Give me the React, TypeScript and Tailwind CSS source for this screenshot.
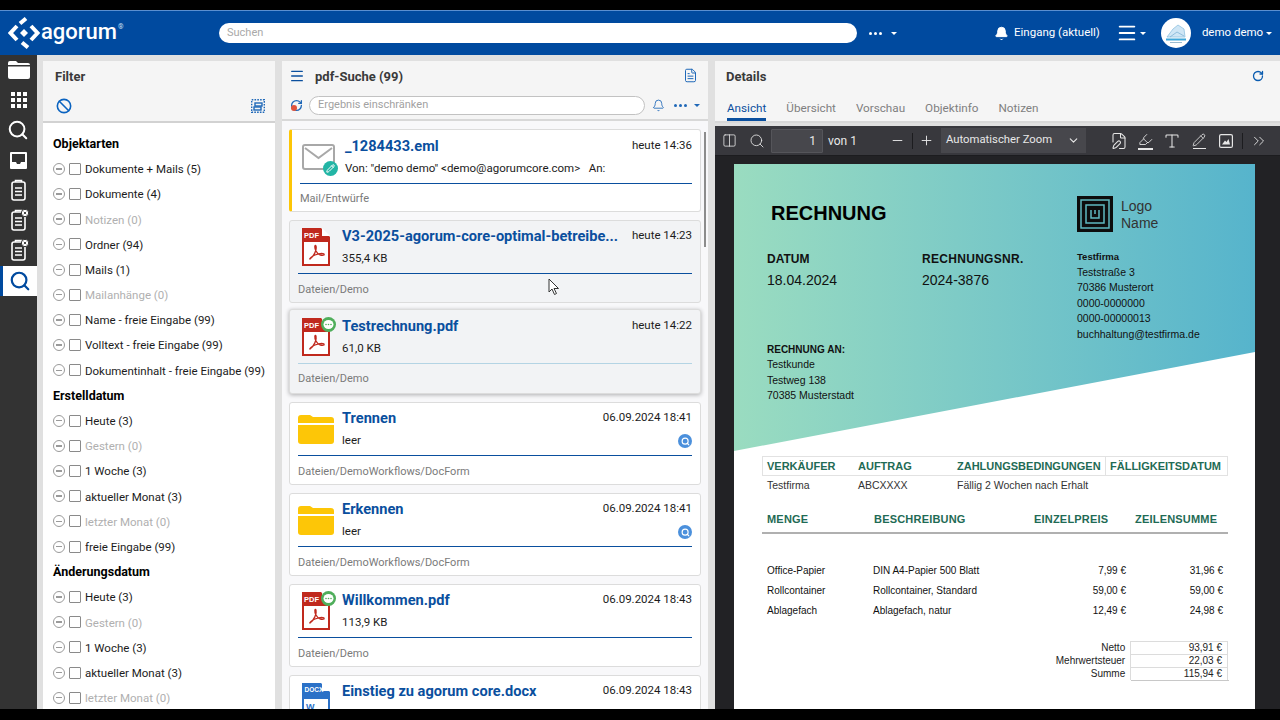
import React from 'react';
import { Ban, Bell, ChevronDown, ChevronsRight, FileText, Highlighter, Menu, Minus, Pencil, Plus, RotateCw, Search, Type, Columns2, FilePen } from 'lucide-react';

const Caret = ({ className = 'border-t-white' }: { className?: string }) => (
  <span className={`inline-block w-0 h-0 border-x-[3px] border-x-transparent border-t-[3px] ${className}`} />
);

const Dots = ({ className = 'bg-white' }: { className?: string }) => (
  <span className="inline-flex gap-[2px]">
    <span className={`w-[3px] h-[3px] rounded-full ${className}`} />
    <span className={`w-[3px] h-[3px] rounded-full ${className}`} />
    <span className={`w-[3px] h-[3px] rounded-full ${className}`} />
  </span>
);

const AgorumMark = () => (
  <svg width="32" height="32" viewBox="0 0 32 32" fill="none" stroke="#fff" strokeWidth="4">
    <path d="M9 9 L2.5 16 L9 23" />
    <path d="M23 9 L29.5 16 L23 23" />
    <path d="M12 6.5 L18 1.5" />
    <path d="M14 25.5 L20 30.5" />
    <path d="M16 12 L20 16 L16 20 L12 16 Z" fill="#fff" stroke="none" />
  </svg>
);

const Avatar = () => (
  <svg width="30" height="30" viewBox="0 0 30 30">
    <circle cx="15" cy="15" r="15" fill="#fff" />
    <path d="M6 19 L12 11 L17 7 L23 11 L24 19 Z" fill="#cfe6f5" stroke="#8fc2e0" strokeWidth="0.8" />
    <path d="M9 19 L16 14 L23 18" fill="none" stroke="#7fb4d6" strokeWidth="0.8" />
    <rect x="5" y="20.5" width="20" height="2" fill="#3fa7d9" />
    <rect x="9" y="24" width="12" height="1" fill="#9bbcd0" />
  </svg>
);

const Header = () => (
  <header className="h-[45px] shrink-0 bg-[#004a9f] border-t border-[#5a8fd0] flex items-center text-white whitespace-nowrap">
    <div className="w-[219px] shrink-0 pl-2 flex items-center gap-[1px]">
      <AgorumMark />
      <span className="text-[22px] leading-none font-medium -mt-[3px]">agorum</span>
      <span className="text-[7px] -mt-3 text-[#cfe0f5]">®</span>
    </div>
    <div className="w-[638px] shrink-0 h-[20px] bg-white rounded-full flex items-center px-2 pt-[1px] text-[11px] text-[#a9a9a9]">Suchen</div>
    <div className="ml-[12px] flex items-center gap-[9px] w-[125px] shrink-0">
      <Dots />
      <Caret />
    </div>
    <Bell size={15} fill="#fff" strokeWidth={1.5} className="shrink-0" />
    <span className="ml-[5px] text-[11.5px]">Eingang (aktuell)</span>
    <Menu size={22} strokeWidth={2} className="ml-[16px] shrink-0" />
    <span className="ml-[2px] flex"><Caret /></span>
    <span className="ml-[15px] flex shrink-0"><Avatar /></span>
    <span className="ml-[11px] text-[11.5px]">demo demo</span>
    <span className="ml-[3px] flex"><Caret /></span>
  </header>
);

const ClipboardIcon = ({ badge }: { badge?: boolean }) => (
  <svg width="20" height="22" viewBox="0 0 20 22" fill="none" stroke="#fff" strokeWidth="1.6">
    <rect x="3" y="3" width="13" height="18" rx="2" />
    <path d="M6.5 3 V1.5 H12.5 V3" />
    <path d="M6 9 H13 M6 12.5 H13 M6 16 H13" />
    {badge && (
      <>
        <circle cx="16" cy="4" r="3.7" fill="#fff" stroke="#333" strokeWidth="1" />
        <path d="M14.8 2.8 L17.2 5.2 M17.2 2.8 L14.8 5.2" stroke="#333" strokeWidth="0.9" />
      </>
    )}
  </svg>
);

const Sidebar = () => (
  <nav className="w-[37px] shrink-0 bg-[#333333] flex flex-col text-white">
    <div className="h-[30px] flex items-center justify-center">
      <svg width="22" height="18" viewBox="0 0 22 18" fill="#fff">
        <path d="M2 0 H8 L10 2 H20 A2 2 0 0 1 22 4 H0 V2 A2 2 0 0 1 2 0 Z" />
        <path d="M0 5.5 H22 V16 A2 2 0 0 1 20 18 H2 A2 2 0 0 1 0 16 Z" />
      </svg>
    </div>
    <div className="h-[30px] flex items-center justify-center">
      <svg width="16" height="16" viewBox="0 0 16 16" fill="#fff">
        <rect x="0" y="0" width="4" height="4" /><rect x="6" y="0" width="4" height="4" /><rect x="12" y="0" width="4" height="4" />
        <rect x="0" y="6" width="4" height="4" /><rect x="6" y="6" width="4" height="4" /><rect x="12" y="6" width="4" height="4" />
        <rect x="0" y="12" width="4" height="4" /><rect x="6" y="12" width="4" height="4" /><rect x="12" y="12" width="4" height="4" />
      </svg>
    </div>
    <div className="h-[30px] flex items-center justify-center"><Search size={22} strokeWidth={2.2} className="-ml-[1px]" /></div>
    <div className="h-[30px] flex items-center justify-center">
      <svg width="17" height="17" viewBox="0 0 17 17" fill="#fff">
        <path fillRule="evenodd" d="M1 0 H16 A1 1 0 0 1 17 1 V16 A1 1 0 0 1 16 17 H1 A1 1 0 0 1 0 16 V1 A1 1 0 0 1 1 0 Z M2 2 V10 H6 L7 12 H10 L11 10 H15 V2 Z" />
      </svg>
    </div>
    <div className="h-[30px] flex items-center justify-center"><ClipboardIcon /></div>
    <div className="h-[30px] flex items-center justify-center"><ClipboardIcon badge /></div>
    <div className="h-[30px] flex items-center justify-center"><ClipboardIcon badge /></div>
    <div className="h-[30px] mt-[1px] bg-white border-l-[3px] border-[#004a9f] flex items-center justify-center text-[#004a9f]">
      <Search size={22} strokeWidth={2.4} />
    </div>
  </nav>
);

const FilterRow = ({ label, off }: { label: string; off?: boolean }) => (
  <div className="h-[25.2px] flex items-center">
    <span className="w-[12px] h-[12px] rounded-full border border-[#9a9a9a] flex items-center justify-center shrink-0">
      <span className="w-[6px] h-[1.5px] bg-[#9a9a9a]" />
    </span>
    <span className="ml-[4px] w-[12px] h-[12px] border border-[#8a8a8a] rounded-[1px] bg-white shrink-0" />
    <span className={`ml-[4px] pt-[2px] text-[11.5px] whitespace-nowrap ${off ? 'text-[#b0b0b0]' : 'text-[#1c1c1c]'}`}>{label}</span>
  </div>
);

const FilterTitle = ({ label }: { label: string }) => (
  <div className="h-[25.2px] pt-[2px] flex items-center text-[12.5px] font-bold text-black">{label}</div>
);

const FilterPanel = () => (
  <section className="w-[232px] shrink-0 flex flex-col bg-white overflow-hidden">
    <div className="h-[62px] shrink-0 bg-[#f5f5f5] border-b-2 border-[#d2d2d2] px-[12px] flex flex-col">
      <div className="h-[30px] pt-[2px] flex items-center text-[13px] font-bold text-[#3a3a3a]">Filter</div>
      <div className="h-[30px] flex items-center justify-between pl-[2px] pr-0 -mr-[2px]">
        <Ban size={16} strokeWidth={2.4} className="text-[#0a63c0] -ml-[1px]" />
        <svg width="14" height="14" viewBox="0 0 14 14" fill="none" stroke="#1f68b8" strokeWidth="1.4">
          <rect x="0.7" y="0.7" width="12.6" height="12.6" strokeDasharray="1.6 1.2" />
          <rect x="4" y="4" width="7" height="3" />
          <rect x="3" y="8" width="7" height="3" />
        </svg>
      </div>
    </div>
    <div className="pl-[10px] pt-[8px]">
      <FilterTitle label="Objektarten" />
      <FilterRow label="Dokumente + Mails (5)" />
      <FilterRow label="Dokumente (4)" />
      <FilterRow label="Notizen (0)" off />
      <FilterRow label="Ordner (94)" />
      <FilterRow label="Mails (1)" />
      <FilterRow label="Mailanhänge (0)" off />
      <FilterRow label="Name - freie Eingabe (99)" />
      <FilterRow label="Volltext - freie Eingabe (99)" />
      <FilterRow label="Dokumentinhalt - freie Eingabe (99)" />
      <FilterTitle label="Erstelldatum" />
      <FilterRow label="Heute (3)" />
      <FilterRow label="Gestern (0)" off />
      <FilterRow label="1 Woche (3)" />
      <FilterRow label="aktueller Monat (3)" />
      <FilterRow label="letzter Monat (0)" off />
      <FilterRow label="freie Eingabe (99)" />
      <FilterTitle label="Änderungsdatum" />
      <FilterRow label="Heute (3)" />
      <FilterRow label="Gestern (0)" off />
      <FilterRow label="1 Woche (3)" />
      <FilterRow label="aktueller Monat (3)" />
      <FilterRow label="letzter Monat (0)" off />
    </div>
  </section>
);

const PdfIcon = ({ badge }: { badge?: boolean }) => (
  <span className="relative block w-[28px] h-[38px]">
    <svg width="28" height="38" viewBox="0 0 28 38">
      <path d="M0 0 H19 L28 9 V38 H0 Z" fill="#c0291d" />
      <path d="M20 0 L28 8 H20 Z" fill="#fff" />
      <rect x="2" y="14" width="24" height="22" fill="#fff" />
      <text x="2" y="9.5" fontSize="7.5" fontWeight="700" fill="#fff" fontFamily="Liberation Sans, sans-serif">PDF</text>
      <path d="M8 31 C12 28 15 22 14 18 C13 16 12 19 14 23 C16 27 20 28 22 27 C23 25 18 25 13 27 C10 28 7 31 8 31 Z" fill="none" stroke="#c0291d" strokeWidth="1.3" />
    </svg>
    {badge && (
      <svg className="absolute -top-[1px] -right-[6px]" width="15" height="15" viewBox="0 0 15 15">
        <circle cx="7.5" cy="7.5" r="7.5" fill="#4fae5b" />
        <ellipse cx="7.5" cy="7.5" rx="5" ry="4.5" fill="#fff" />
        <circle cx="5" cy="7.5" r="0.8" fill="#4fae5b" />
        <circle cx="7.5" cy="7.5" r="0.8" fill="#4fae5b" />
        <circle cx="10" cy="7.5" r="0.8" fill="#4fae5b" />
      </svg>
    )}
  </span>
);

const FolderIcon = () => (
  <svg width="36" height="29" viewBox="0 0 36 29" fill="#fdc607">
    <path d="M0 3 A3 3 0 0 1 3 0 H12 L15 2 H33 A3 3 0 0 1 36 5 V8 H0 Z" />
    <path d="M0 10 H36 V26 A3 3 0 0 1 33 29 H3 A3 3 0 0 1 0 26 Z" />
  </svg>
);

const MailIcon = () => (
  <span className="relative block w-[33px] h-[26px]">
    <svg width="33" height="26" viewBox="0 0 33 26" fill="none" stroke="#a8a8a8" strokeWidth="2">
      <rect x="1" y="1" width="31" height="24" rx="2" />
      <path d="M3 4 L16.5 14 L30 4" />
    </svg>
    <span className="absolute -right-[3px] -bottom-[6px] w-[15px] h-[15px] rounded-full bg-[#22b5a5] flex items-center justify-center text-white">
      <Pencil size={9} strokeWidth={2.6} />
    </span>
  </span>
);

const DocxIcon = () => (
  <svg width="28" height="38" viewBox="0 0 28 38">
    <path d="M0 0 H19 L28 9 V38 H0 Z" fill="#2b71c7" />
    <path d="M20 0 L28 8 H20 Z" fill="#fff" />
    <rect x="2" y="16" width="24" height="20" fill="#fff" />
    <text x="2.5" y="9" fontSize="6.5" fontWeight="700" fill="#fff" fontFamily="Liberation Sans, sans-serif">DOCX</text>
    <text x="4" y="27" fontSize="9" fontWeight="700" fill="#2b71c7" fontFamily="Liberation Sans, sans-serif">W</text>
  </svg>
);

type CardProps = {
  icon: React.ReactNode;
  iconClass: string;
  title: string;
  time: string;
  sub?: React.ReactNode;
  path: string;
  found?: boolean;
  variant?: 'mail' | 'grey' | 'active';
  lightLine?: boolean;
  cursor?: boolean;
};

const Card = ({ icon, iconClass, title, time, sub, path, found, variant, lightLine, cursor }: CardProps) => (
  <div
    className={`relative shrink-0 rounded-[3px] border border-[#dcdcdc] pr-[8px] pl-[8px] ${
      variant === 'active' ? 'h-[85px] -mt-[2px] pt-[1px]' : 'h-[83px]'
    } ${variant === 'mail' ? 'bg-white border-l-[3px] border-l-[#fdc607] pt-[1px]' : ''} ${
      variant === 'grey' ? 'bg-[#f2f3f5]' : ''
    } ${variant === 'active' ? 'bg-[#f2f3f5] shadow-[0_1px_4px_rgba(0,0,0,0.3)]' : ''} ${!variant ? 'bg-white' : ''}`}
  >
    <div className="flex h-[52px] items-start">
      <div className={`shrink-0 ${iconClass}`}>{icon}</div>
      <div className="flex-1 min-w-0 pt-[6px]">
        <div className="flex items-center justify-between h-[20px] gap-[12px]">
          <span className="text-[14.6px] font-bold text-[#0a4f9e] whitespace-nowrap">{title}</span>
          <span className="text-[11.5px] text-[#1c1c1c] whitespace-nowrap shrink-0 -mt-[2px]">{time}</span>
        </div>
        <div className="flex items-center justify-between h-[20px] mt-[2px] text-[11.5px] text-[#1c1c1c]">
          <span className="whitespace-pre">{sub}</span>
          {found && (
            <span className="w-[14px] h-[14px] rounded-full bg-[#4b90dc] flex items-center justify-center text-white">
              <Search size={9} strokeWidth={3} />
            </span>
          )}
        </div>
      </div>
    </div>
    <div className={`border-t ${lightLine ? 'border-[#b4d4e4]' : 'border-[#0a4f9e]'}`} />
    <div className={`h-[20px] flex items-center text-[11px] text-[#7a7a7a] ${variant === 'mail' || variant === 'active' ? 'mt-[5px]' : 'mt-[6px]'}`}>{path}</div>
    {cursor && (
      <svg className="absolute left-[258px] top-[57px]" width="12" height="18" viewBox="0 0 12 18" fill="#fff" stroke="#333" strokeWidth="1">
        <path d="M1 1 V14 L4 11 L6.5 16.5 L8.5 15.5 L6 10.5 H10.5 Z" />
      </svg>
    )}
  </div>
);

const ResultPanel = () => (
  <section className="w-[426px] shrink-0 flex flex-col bg-[#f8f8fa] overflow-hidden relative">
    <div className="h-[60px] shrink-0 bg-[#f5f5f5] border-b-2 border-[#d8d8d8] flex flex-col px-[8px]">
      <div className="h-[30px] flex items-center">
        <Menu size={16} strokeWidth={2} className="text-[#0a4f9e] -ml-[1px]" />
        <span className="ml-[10px] pt-[2px] text-[13px] font-bold text-[#3a3a3a]">pdf-Suche (99)</span>
        <FileText size={15} strokeWidth={1.6} className="ml-auto text-[#1f68b8] mr-[2px]" />
      </div>
      <div className="h-[28px] mt-[1px] flex items-center">
        <span className="relative flex">
          <RotateCw size={13} strokeWidth={2.4} className="text-[#1f68b8]" />
          <span className="absolute left-[1px] top-[6px] w-[6px] h-[6px] rounded-full bg-[#e0533c]" />
        </span>
        <div className="ml-[6px] w-[337px] h-[19px] rounded-full border border-[#c2c2c2] bg-white flex items-center px-[8px] text-[11px] text-[#a2a2a2]">Ergebnis einschränken</div>
        <Bell size={13} strokeWidth={1.6} className="ml-[7px] text-[#1f68b8]" />
        <span className="ml-[9px] flex items-center gap-[7px]"><Dots className="bg-[#1f68b8]" /><Caret className="border-t-[#1f68b8]" /></span>
      </div>
    </div>
    <div className="flex flex-col gap-[8px] pl-[7px] pr-[7px] pt-[8px]">
      <Card variant="mail" iconClass="w-[45px] pt-[13px] pl-[2px]" icon={<MailIcon />} title="_1284433.eml" time="heute 14:36" sub={'Von: "demo demo" <demo@agorumcore.com>   An:'} path="Mail/Entwürfe" />
      <Card variant="grey" cursor iconClass="w-[44px] pt-[7px] pl-[4px]" icon={<PdfIcon />} title="V3-2025-agorum-core-optimal-betreibe..." time="heute 14:23" sub="355,4 KB" path="Dateien/Demo" />
      <Card variant="active" lightLine iconClass="w-[44px] pt-[7px] pl-[4px]" icon={<PdfIcon badge />} title="Testrechnung.pdf" time="heute 14:22" sub="61,0 KB" path="Dateien/Demo" />
      <Card iconClass="w-[44px] pt-[12px]" icon={<FolderIcon />} found title="Trennen" time="06.09.2024 18:41" sub="leer" path="Dateien/DemoWorkflows/DocForm" />
      <Card iconClass="w-[44px] pt-[12px]" icon={<FolderIcon />} found title="Erkennen" time="06.09.2024 18:41" sub="leer" path="Dateien/DemoWorkflows/DocForm" />
      <Card iconClass="w-[44px] pt-[7px] pl-[4px]" icon={<PdfIcon badge />} title="Willkommen.pdf" time="06.09.2024 18:43" sub="113,9 KB" path="Dateien/Demo" />
      <Card iconClass="w-[44px] pt-[7px] pl-[4px]" icon={<DocxIcon />} title="Einstieg zu agorum core.docx" time="06.09.2024 18:43" sub="" path="" />
    </div>
    <div className="absolute right-[2px] top-[71px] w-[2px] h-[115px] bg-[#8c8c8c]" />
  </section>
);

const ToolIcon = ({ children, className = '' }: { children: React.ReactNode; className?: string }) => (
  <span className={`flex flex-col items-center justify-center text-[#e6e6e6] ${className}`}>{children}</span>
);

const PdfToolbar = () => (
  <div className="h-[30px] shrink-0 bg-[#38383d] border-b border-[#1c1c1f] flex items-center text-[#e8e8e8] text-[12px] pl-[7px] whitespace-nowrap">
    <ToolIcon><Columns2 size={15} strokeWidth={1.3} /></ToolIcon>
    <ToolIcon className="ml-[12px]"><Search size={16} strokeWidth={1.3} /></ToolIcon>
    <div className="ml-[6px] w-[52px] h-[24px] bg-[#47474c] border border-[#55555a] rounded-[1px] flex items-center justify-end pr-[6px]">1</div>
    <span className="ml-[5px] w-[62px]">von 1</span>
    <ToolIcon><Minus size={15} strokeWidth={1.5} /></ToolIcon>
    <span className="ml-[7px] w-px h-[16px] bg-[#1c1c1f]" />
    <ToolIcon className="ml-[6px]"><Plus size={15} strokeWidth={1.5} /></ToolIcon>
    <div className="ml-[7px] w-[145px] h-[25px] bg-[#47474c] flex items-center justify-between pl-[5px] pr-[6px] text-[11.3px]">
      <span>Automatischer Zoom</span>
      <ChevronDown size={13} />
    </div>
    <ToolIcon className="ml-[24px]"><FilePen size={18} strokeWidth={1.4} /></ToolIcon>
    <ToolIcon className="ml-[10px]"><Highlighter size={15} strokeWidth={1.4} /><span className="w-[15px] h-[2px] bg-[#e6e6e6] mt-[1px]" /></ToolIcon>
    <ToolIcon className="ml-[10px]"><Type size={18} strokeWidth={1.4} /></ToolIcon>
    <ToolIcon className="ml-[11px]"><Pencil size={14} strokeWidth={1.4} /><span className="w-[13px] h-px bg-[#e6e6e6] mt-[1px]" /></ToolIcon>
    <ToolIcon className="ml-[13px]">
      <svg width="14" height="14" viewBox="0 0 14 14" fill="none" stroke="currentColor" strokeWidth="1.2">
        <rect x="0.6" y="0.6" width="12.8" height="12.8" rx="1.5" />
        <path d="M3 10.5 L6 6.5 L7.5 8 L9.5 5 L11 10.5 Z" fill="currentColor" stroke="none" />
      </svg>
    </ToolIcon>
    <span className="ml-[9px] w-px h-[16px] bg-[#1c1c1f]" />
    <ToolIcon className="ml-[7px]"><ChevronsRight size={18} strokeWidth={1.2} /></ToolIcon>
  </div>
);

const LogoMaze = () => (
  <svg width="36" height="36" viewBox="0 0 36 36" fill="none" stroke="#5fb9c0" strokeWidth="1.5">
    <rect width="36" height="36" fill="#0d0d0d" stroke="none" />
    <rect x="4" y="4" width="28" height="28" />
    <rect x="9" y="9" width="18" height="18" />
    <path d="M14 14 V22 H22 V14" />
    <path d="M18 14 V18" />
  </svg>
);

const ItemRow = ({ a, b, c, d }: { a: string; b: string; c: string; d: string }) => (
  <div className="grid grid-cols-[107px_160px_97px_102px] h-[20px] items-center text-[10px] text-[#111]">
    <span className="pl-[5px]">{a}</span>
    <span className="pl-[4px]">{b}</span>
    <span className="text-right">{c}</span>
    <span className="text-right pr-[5px]">{d}</span>
  </div>
);

const TotalRow = ({ label, value }: { label: string; value: string }) => (
  <div className="flex h-[13px] items-center text-[10px] leading-none text-[#222]">
    <span className="w-[364px] text-right">{label}</span>
    <span className="ml-[5px] w-[98px] pr-[5px] border-x border-t border-[#dcdcdc] h-[13px] flex items-center justify-end">{value}</span>
  </div>
);

const Invoice = () => (
  <div className="w-[521px] h-[560px] bg-white shrink-0 font-['Liberation_Sans',sans-serif] text-[#111]">
    <div className="h-[287px] bg-gradient-to-r from-[#9adcc0] to-[#56b4cc] [clip-path:polygon(0_0,100%_0,100%_188px,0_100%)] flex pl-[33px]">
      <div className="w-[310px] pt-[35px] shrink-0">
        <div className="h-[28px] pl-[4px] text-[20px] font-bold leading-[28px] text-black">RECHNUNG</div>
        <div className="flex mt-[22px]">
          <div className="w-[155px]">
            <div className="h-[20px] text-[12px] font-bold leading-[20px]">DATUM</div>
            <div className="h-[22px] text-[14px] leading-[22px]">18.04.2024</div>
          </div>
          <div>
            <div className="h-[20px] text-[12px] font-bold leading-[20px] tracking-[0.3px]">RECHNUNGSNR.</div>
            <div className="h-[22px] text-[14px] leading-[22px]">2024-3876</div>
          </div>
        </div>
        <div className="mt-[51px] text-[10px] leading-[15.3px]">
          <div className="font-bold">RECHNUNG AN:</div>
          <div className="text-[10.5px]">Testkunde</div>
          <div className="text-[10.5px]">Testweg 138</div>
          <div className="text-[10.5px]">70385 Musterstadt</div>
        </div>
      </div>
      <div className="pt-[32px]">
        <div className="flex items-center h-[36px]">
          <LogoMaze />
          <div className="ml-[8px] pt-[2px] text-[14px] leading-[17px] text-[#333]">Logo<br />Name</div>
        </div>
        <div className="mt-[17px] text-[10.5px] leading-[15.6px]">
          <div className="font-bold text-[9.5px]">Testfirma</div>
          <div>Teststraße 3</div>
          <div>70386 Musterort</div>
          <div>0000-0000000</div>
          <div>0000-00000013</div>
          <div>buchhaltung@testfirma.de</div>
        </div>
      </div>
    </div>
    <div className="pl-[28px] w-[494px] mt-[5px]">
      <div className="grid grid-cols-[90px_99px_153px_122px] h-[20px] items-center border border-[#e2e2e2] text-[11px] font-bold text-[#1f6b55]">
        <span className="pl-[4px]">VERKÄUFER</span>
        <span className="pl-[5px]">AUFTRAG</span>
        <span className="pl-[5px] whitespace-nowrap">ZAHLUNGSBEDINGUNGEN</span>
        <span className="pl-[4px] border-l border-[#e2e2e2] h-full flex items-center whitespace-nowrap">FÄLLIGKEITSDATUM</span>
      </div>
      <div className="grid grid-cols-[91px_99px_276px] h-[17px] mt-[1px] items-center text-[10.5px] text-[#333]">
        <span className="pl-[5px]">Testfirma</span>
        <span className="pl-[5px]">ABCXXXX</span>
        <span className="pl-[5px]">Fällig 2 Wochen nach Erhalt</span>
      </div>
      <div className="mt-[11px] grid grid-cols-[107px_160px_101px_98px] h-[29px] pt-[2px] items-center border-b-2 border-[#b0b0b0] text-[11px] font-bold text-[#1f6b55] tracking-[0.2px]">
        <span className="pl-[5px]">MENGE</span>
        <span className="pl-[5px]">BESCHREIBUNG</span>
        <span className="pl-[5px]">EINZELPREIS</span>
        <span className="pl-[5px]">ZEILENSUMME</span>
      </div>
      <div className="mt-[26px]">
        <ItemRow a="Office-Papier" b="DIN A4-Papier 500 Blatt" c="7,99 €" d="31,96 €" />
        <ItemRow a="Rollcontainer" b="Rollcontainer, Standard" c="59,00 €" d="59,00 €" />
        <ItemRow a="Ablagefach" b="Ablagefach, natur" c="12,49 €" d="24,98 €" />
      </div>
      <div className="mt-[21px]">
        <TotalRow label="Netto" value="93,91 €" />
        <TotalRow label="Mehrwertsteuer" value="22,03 €" />
        <TotalRow label="Summe" value="115,94 €" />
        <div className="h-px w-[98px] ml-[369px] bg-[#c8c8c8]" />
      </div>
    </div>
  </div>
);

const DetailsPanel = () => (
  <section className="flex-1 min-w-0 flex flex-col overflow-hidden">
    <div className="h-[62px] shrink-0 bg-[#f5f5f5] border-b-2 border-[#d8d8d8] flex flex-col pl-[12px] pr-[16px]">
      <div className="h-[30px] flex items-center justify-between">
        <span className="pt-[2px] text-[13px] font-bold text-[#3a3a3a] -ml-[1px]">Details</span>
        <RotateCw size={12} strokeWidth={2.6} className="text-[#0a5cb0]" />
      </div>
      <div className="flex-1 flex items-end gap-[20px] text-[11.7px] text-[#7f7f7f]">
        <span className="h-[30px] flex items-center text-[#0a4f9e] border-b-[3px] border-[#0a4f9e] pt-[9px]">Ansicht</span>
        <span className="h-[30px] flex items-center pt-[6px]">Übersicht</span>
        <span className="h-[30px] flex items-center pt-[6px]">Vorschau</span>
        <span className="h-[30px] flex items-center pt-[6px]">Objektinfo</span>
        <span className="h-[30px] flex items-center pt-[6px]">Notizen</span>
      </div>
    </div>
    <div className="flex-1 min-h-0 mt-[3px] flex flex-col bg-[#222225]">
      <PdfToolbar />
      <div className="flex-1 min-h-0 overflow-hidden pl-[19px] pt-[8px]">
        <Invoice />
      </div>
    </div>
  </section>
);

const App = () => (
  <div className="h-screen w-[1280px] flex flex-col bg-black overflow-hidden font-['Roboto',sans-serif]">
    <div className="h-[10px] shrink-0" />
    <Header />
    <div className="h-[654px] shrink-0 flex bg-[#e0e0e0]">
      <Sidebar />
      <div className="flex-1 min-w-0 flex gap-[7px] pl-[6px] pt-[6px]">
        <FilterPanel />
        <ResultPanel />
        <DetailsPanel />
      </div>
    </div>
  </div>
);

export default App;
